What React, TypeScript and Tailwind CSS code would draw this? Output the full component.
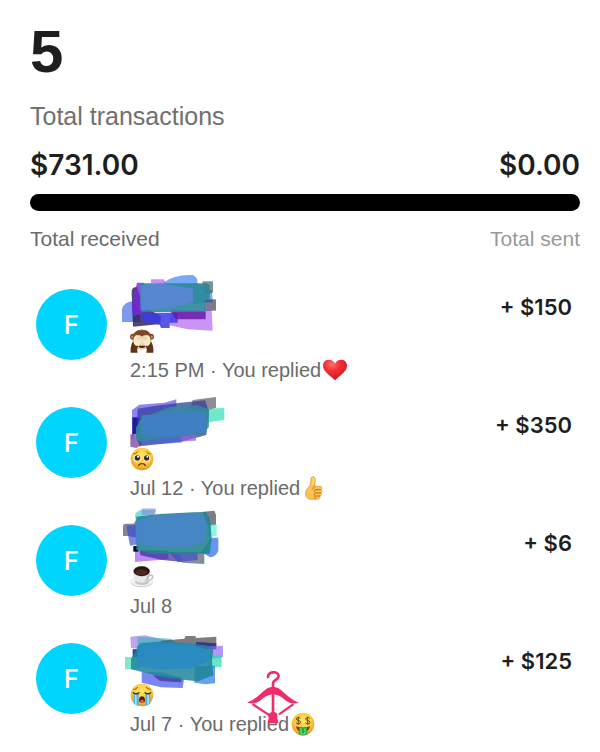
import React from "react";

type Transaction = {
  id: number;
  scribble: React.ReactNode;
  note: React.ReactNode;
  meta: string;
  reaction?: React.ReactNode;
  amount: string;
};

function FaceBase({ id }: { id: string }) {
  return (
    <>
      <defs>
        <radialGradient id={id} cx="50%" cy="35%" r="65%">
          <stop offset="0" stopColor="#ffe566" />
          <stop offset="0.6" stopColor="#fbc93d" />
          <stop offset="1" stopColor="#e8921f" />
        </radialGradient>
      </defs>
      <circle cx="36" cy="36" r="34" fill={`url(#${id})`} />
    </>
  );
}

function MonkeyEmoji() {
  return (
    <svg viewBox="0 0 72 72" className="w-6 h-6" role="img" aria-label="See no evil monkey">
      <circle cx="9" cy="23" r="9" fill="#8a4b2c" />
      <circle cx="63" cy="23" r="9" fill="#8a4b2c" />
      <circle cx="8" cy="24" r="4" fill="#e0a09a" />
      <circle cx="64" cy="24" r="4" fill="#e0a09a" />
      <path d="M36 2C19 2 8 12 8 27c0 20 12 34 28 34s28-14 28-34C64 12 53 2 36 2z" fill="#7b4a25" />
      <path d="M30 4l6-3 4 4z" fill="#b27a43" />
      <path d="M12 26c4-9 18-9 24-3 6-6 20-6 24 3l-3 25c-4 8-14 11-21 11s-17-3-21-11z" fill="#edd3a4" />
      <path d="M25 50h22c-2 9-20 9-22 0z" fill="#4b160d" />
      <path d="M2 71c-1-13 1-25 7-34l16 14c-4 7-4 12-2 20z" fill="#5e3319" />
      <path d="M70 71c1-13-1-25-7-34L47 51c4 7 4 12 2 20z" fill="#5e3319" />
      <path d="M11 42c-3-10 1-20 7-23 6-2 16 3 17 11 1 9-6 20-14 21-5 0-8-4-10-9z" fill="#f6e7c6" />
      <path d="M61 42c3-10-1-20-7-23-6-2-16 3-17 11-1 9 6 20 14 21 5 0 8-4 10-9z" fill="#f6e7c6" />
      <path d="M21 24l7 10M28 22l4 9M51 24l-7 10M44 22l-4 9" stroke="#d3b68a" strokeWidth="2" fill="none" />
    </svg>
  );
}

function PleadingEmoji() {
  return (
    <svg viewBox="0 0 72 72" className="w-6 h-6" role="img" aria-label="Pleading face">
      <FaceBase id="pleading" />
      <circle cx="21" cy="34" r="10" fill="#fff" />
      <circle cx="51" cy="34" r="10" fill="#fff" />
      <circle cx="22" cy="33" r="8" fill="#3b2a20" />
      <circle cx="50" cy="33" r="8" fill="#3b2a20" />
      <circle cx="24" cy="29" r="3" fill="#fff" />
      <circle cx="52" cy="29" r="3" fill="#fff" />
      <path d="M11 21c5 0 9-3 12-7M61 21c-5 0-9-3-12-7" stroke="#8a5a10" strokeWidth="3" fill="none" strokeLinecap="round" />
      <path d="M26 55c4-7 16-7 20 0" stroke="#5c2c0c" strokeWidth="4" fill="none" strokeLinecap="round" />
    </svg>
  );
}

function CoffeeEmoji() {
  return (
    <svg viewBox="0 0 72 72" className="w-6 h-6" role="img" aria-label="Hot beverage">
      <ellipse cx="35" cy="51" rx="34" ry="16" fill="#d3d3d1" />
      <ellipse cx="35" cy="49" rx="33" ry="14" fill="#f3f3f1" />
      <ellipse cx="36" cy="51" rx="21" ry="9" fill="#c5c5c3" />
      <path d="M59 31c12-3 14 11-5 16" stroke="#c4c4c2" strokeWidth="5" fill="none" />
      <path d="M9 20c0 18 8 33 26 33s26-15 26-33z" fill="#e8e8e6" />
      <path d="M44 50c10-4 16-15 17-29l-9 12z" fill="#bdbdbb" />
      <ellipse cx="35" cy="19" rx="27" ry="17" fill="#dddddb" />
      <ellipse cx="35" cy="19" rx="24" ry="15" fill="#2c1610" />
      <ellipse cx="34" cy="22" rx="18" ry="9" fill="#4b281b" />
    </svg>
  );
}

function CryingEmoji() {
  return (
    <svg viewBox="0 0 72 72" className="w-6 h-6" role="img" aria-label="Loudly crying face">
      <FaceBase id="crying" />
      <path d="M11 31h15v36c-7 1-12-1-15-6zM46 31h15v30c-3 5-8 7-15 6z" fill="#4eb2e5" />
      <path d="M15 33h5v32h-5zM52 33h5v32h-5z" fill="#a5e3f7" />
      <path d="M10 29c5 4 12 4 17 0M45 29c5 4 12 4 17 0" stroke="#4a2a10" strokeWidth="4" fill="none" strokeLinecap="round" />
      <path d="M11 19c5 0 9-2 12-6M61 19c-5 0-9-2-12-6" stroke="#8a5a10" strokeWidth="3" fill="none" strokeLinecap="round" />
      <path d="M27 53c0-10 4-13 9-13s9 3 9 13c0 7-18 7-18 0z" fill="#5b1b11" />
      <path d="M30 54c2-5 10-5 12 0-1 4-11 4-12 0z" fill="#ef5a4c" />
    </svg>
  );
}

function HeartEmoji() {
  return (
    <svg viewBox="0 0 72 72" className="w-6 h-6" role="img" aria-label="Red heart">
      <defs>
        <radialGradient id="heart" cx="38%" cy="22%" r="75%">
          <stop offset="0" stopColor="#ff7470" />
          <stop offset="0.4" stopColor="#f2333a" />
          <stop offset="1" stopColor="#cf1722" />
        </radialGradient>
      </defs>
      <path d="M36 67C26 55 0 42 0 23 0 2 29 0 36 17 43 0 72 2 72 23c0 19-26 32-36 44z" fill="url(#heart)" />
    </svg>
  );
}

function ThumbEmoji() {
  return (
    <svg viewBox="0 0 72 72" className="w-6 h-6" role="img" aria-label="Thumbs up">
      <path
        d="M29 3c5-3 11 1 11 8l-2 20h15c7 0 8 8 4 10 4 3 3 8 0 10 2 3 1 8-3 9 1 5-2 10-8 10H28C16 70 10 62 11 50c0-11 9-13 13-22 4-8 1-20 5-25z"
        fill="#fbc252"
        stroke="#dc8c28"
        strokeWidth="2"
      />
      <path d="M38 31c-4 2-6 5-5 9M57 41H41c-5 0-5 6-1 8M57 51H40c-4 1-4 7 0 8M54 60H40c-3 2-2 6 1 8" stroke="#bd6d1c" strokeWidth="3" fill="none" />
      <path d="M30 8c3-2 5 0 5 4l-2 14" stroke="#ffe08a" strokeWidth="4" fill="none" />
    </svg>
  );
}

function MoneyEmoji() {
  return (
    <svg viewBox="0 0 72 72" className="w-6 h-6" role="img" aria-label="Money mouth face">
      <FaceBase id="money" />
      <path d="M28 19c-3-4-12-3-12 2 0 6 13 3 13 10 0 6-11 6-14 1M22 14v24M56 19c-3-4-12-3-12 2 0 6 13 3 13 10 0 6-11 6-14 1M50 14v24" stroke="#6d4a12" strokeWidth="3" fill="none" />
      <path d="M15 43c12 5 30 5 42 0-3 13-11 18-21 18s-18-5-21-18z" fill="#69391a" />
      <path d="M24 46c8 2 16 2 24 0l1 21c-7 5-19 5-26 0z" fill="#27ad43" />
      <path d="M28 49c5 1 11 1 16 0v16c-4 3-12 3-16 0z" fill="#67dc70" />
      <path d="M40 53c-4-3-9-1-7 2 2 2 7 1 7 4s-6 3-8 1M36 50v15" stroke="#12772b" strokeWidth="2" fill="none" />
    </svg>
  );
}

function HangerLogo() {
  return (
    <svg viewBox="0 0 156 160" className="w-[52px] h-[53px]" fill="none" role="img" aria-label="Hanger">
      <path d="M63 18C61 2 92-2 95 14c2 13-17 11-17 24v14" stroke="#f02d6b" strokeWidth="8" strokeLinecap="round" />
      <path d="M0 95c22-6 40-28 58-41 12-8 28-8 40 0 18 13 36 35 58 41-14 6-29 2-41-7-10-9-22-17-37-17s-27 8-37 17c-12 9-27 13-41 7z" fill="#f02d6b" />
      <path d="M78 68v66" stroke="#f02d6b" strokeWidth="8" />
      <path d="M16 100l52 34M140 100l-44 31" stroke="#f02d6b" strokeWidth="7" />
      <path d="M66 128l8-4h10l7 5v14l3 14-8 1H70l-9-1 4-14-2-12z" fill="#f02d6b" />
    </svg>
  );
}

function ScribbleOne() {
  return (
    <svg viewBox="0 -3 390 192" className="-ml-[19px] w-[130px] h-16 shrink-0 overflow-visible" aria-hidden="true">
      <path d="M180 130l122 2 3 62-75-4-55-12z" fill="#b266f5" opacity="0.7" />
      <path d="M33 128q8-20 30-22l22 30 4 32H33z" fill="#4a6de8" opacity="0.7" />
      <path d="M62 78q0-15 16-15l20 60 52 27-2 24-82 8z" fill="#231a55" opacity="0.8" />
      <path d="M78 50h20l4 92-34 8-6-30z" fill="#7a26dd" opacity="0.8" />
      <path d="M90 140h110v30h-24v16h-26l-4-10-50-8z" fill="#3c3ae8" opacity="0.85" />
      <path d="M156 50q36-26 88-23 16 3 16 26l42 20 4 34-60 8z" fill="#4b8cf0" opacity="0.75" />
      <path d="M180 136h104v24h-90z" fill="#6a1aa8" opacity="0.85" />
      <path d="M274 46h32v34l-24 4z" fill="#3c5958" opacity="0.65" />
      <path d="M280 100h35v34h-35z" fill="#38344f" opacity="0.65" />
      <path d="M88 52h196l12 4v44l-14 6v28l-90 4H94l-6-14z" fill="#2b879c" opacity="0.9" />
      <path d="M89 58l60-6 97 16v40l-60 14-97 12z" fill="#5a86d6" opacity="0.9" />
      <path d="M120 40h38l6 12h-44z" fill="#9b4df0" opacity="0.6" />
    </svg>
  );
}

function ScribbleTwo() {
  return (
    <svg viewBox="0 -21 390 192" className="-ml-[19px] w-[130px] h-16 shrink-0 overflow-visible" aria-hidden="true">
      <path d="M63 60l22-16 75-6 36-10v24l-110 40-23 60z" fill="#6a5bef" opacity="0.75" />
      <path d="M245 30l70-9v32l-32 10-45-4z" fill="#5f5965" opacity="0.7" />
      <path d="M280 56l60-2v36l-30 4-27 6z" fill="#22dcb0" opacity="0.65" />
      <path d="M64 82h21v50h-21z" fill="#14108c" opacity="0.9" />
      <path d="M58 133h36l-2 32-16 9-18-4z" fill="#75439c" opacity="0.75" />
      <path d="M80 56q60-10 114-16l88-9 12 34-8 70-75 20-125 14-10-28z" fill="#33409e" opacity="0.75" />
      <path d="M205 120l50-4v36l-50 3z" fill="#9a5ee0" opacity="0.7" />
      <path d="M92 134l120-5v29l-120 6z" fill="#3d59e4" opacity="0.5" />
      <path d="M75 112l18-28 80-32 85-6 36 12v52l-16 22-54 6-110 12-25 6-14-10z" fill="#2f8d9c" opacity="0.8" />
      <path d="M92 76l52-4 20-8h60q34-4 58 8 8 30-5 50l-62 14-70 6-53-10z" fill="#417fc4" />
    </svg>
  );
}

function ScribbleThree() {
  return (
    <svg viewBox="0 -9 390 192" className="-ml-[19px] w-[130px] h-16 shrink-0 overflow-visible" aria-hidden="true">
      <path d="M36 65q0-6 8-6h24l10-14 30 55-50-1v-3H36z" fill="#51506a" opacity="0.7" />
      <path d="M72 34q5-14 20-17h43l-10 20-50 20z" fill="#34d9cf" opacity="0.7" />
      <path d="M92 13h42v20H92z" fill="#8d72d8" opacity="0.5" />
      <path d="M276 23l34-3 5 12v30l-25 5z" fill="#4c4556" opacity="0.7" />
      <path d="M290 62l27-2v36l-27 4z" fill="#32ecc5" opacity="0.55" />
      <path d="M298 101h24v40q-8 17-24 19l-28-15z" fill="#2867ef" opacity="0.7" />
      <path d="M72 138h100v28l-100 8z" fill="#a266ef" opacity="0.75" />
      <path d="M85 140l80 2 47 6 2 26-60-6-65-14z" fill="#3b2a98" opacity="0.7" />
      <path d="M213 145h67v35l-67-4z" fill="#62647d" opacity="0.75" />
      <path d="M175 145l85-2v25l-60 6z" fill="#324bc9" opacity="0.6" />
      <path d="M67 126h15v17H67z" fill="#070d26" />
      <path d="M46 65l34-3 20 55-43 8z" fill="#324bd6" opacity="0.65" />
      <path d="M76 38l70-8 100-5 40-1 12 25 4 58-6 42H120l-44-12z" fill="#23858f" opacity="0.9" />
      <path d="M74 50q80-26 200-20l14 30-6 50-50 20-80 0-78-10z" fill="#4985c9" opacity="0.9" />
    </svg>
  );
}

function ScribbleFour() {
  return (
    <svg viewBox="0 -27 390 192" className="-ml-[19px] w-[130px] h-16 shrink-0 overflow-visible" aria-hidden="true">
      <path d="M58 26l44-4 70 16-20 30-92-8z" fill="#9a80ea" opacity="0.7" />
      <path d="M80 26l100 6 20 20-120 4z" fill="#2fb3b8" opacity="0.6" />
      <path d="M65 64l35-2v25H65z" fill="#0d1b9b" opacity="0.85" />
      <path d="M42 87h45v36l-45 1z" fill="#28d8ae" opacity="0.6" />
      <path d="M150 38l70-6 4-8h30v6l62-4v28l-165 3z" fill="#44454e" opacity="0.7" />
      <path d="M255 42l61 4v18h-61z" fill="#22208a" opacity="0.75" />
      <path d="M296 55l40-2v34l-40 7z" fill="#8055ed" opacity="0.6" />
      <path d="M290 84l42-2v34l-42 4z" fill="#28dcb4" opacity="0.7" />
      <path d="M250 115l62-2v53l-29 3-33-5z" fill="#367fea" opacity="0.75" />
      <path d="M92 132l65 2 62 20-4 26-65-2-58-14z" fill="#4254ea" opacity="0.7" />
      <path d="M125 142l85 5 2 16-65-4z" fill="#30208c" opacity="0.6" />
      <path d="M60 92l27-46 70-6 128 12 22 12-4 36 4 42-47 18-92-10-108-26z" fill="#1f8598" opacity="0.85" />
      <path d="M78 54l65-12 90 6 62 18 4 32-60 24-98 2-61-8z" fill="#288bc3" opacity="0.9" />
    </svg>
  );
}

const transactions: Transaction[] = [
  {
    id: 1,
    scribble: <ScribbleOne />,
    note: <MonkeyEmoji />,
    meta: "2:15 PM · You replied",
    reaction: <HeartEmoji />,
    amount: "+ $150",
  },
  {
    id: 2,
    scribble: <ScribbleTwo />,
    note: <PleadingEmoji />,
    meta: "Jul 12 · You replied",
    reaction: <ThumbEmoji />,
    amount: "+ $350",
  },
  {
    id: 3,
    scribble: <ScribbleThree />,
    note: <CoffeeEmoji />,
    meta: "Jul 8",
    amount: "+ $6",
  },
  {
    id: 4,
    scribble: <ScribbleFour />,
    note: <CryingEmoji />,
    meta: "Jul 7 · You replied",
    reaction: <MoneyEmoji />,
    amount: "+ $125",
  },
];

function TransactionRow({ transaction }: { transaction: Transaction }) {
  return (
    <li className="flex items-start pl-1.5 pr-2">
      <div className="mt-6 w-[71px] h-[71px] shrink-0 rounded-full bg-[#00d5ff] flex items-center justify-center">
        <span className="text-white text-[26px] font-medium font-['Inter',sans-serif]">F</span>
      </div>
      <div className="ml-[23px] flex flex-col">
        {transaction.scribble}
        {transaction.note}
        <div className="mt-1 h-[26px] flex items-center gap-0.5 text-[#6b6b6b] text-xl">
          <span>{transaction.meta}</span>
          {transaction.reaction}
        </div>
      </div>
      <span className="ml-auto mt-[26px] text-[22px] leading-8 font-semibold font-['Inter',sans-serif]">
        {transaction.amount}
      </span>
    </li>
  );
}

function App() {
  return (
    <main className="relative bg-white text-[#1e1e1e] pl-[30px] pr-5 pt-5 pb-3 font-['Liberation_Sans',sans-serif]">
      <h1 className="text-[60px] leading-[64px] font-bold">5</h1>
      <p className="mt-4 text-[25px] leading-8 text-[#707070]">Total transactions</p>
      <div className="mt-[15px] flex justify-between text-[28px] leading-9 font-semibold font-['Inter',sans-serif]">
        <span>$731.00</span>
        <span>$0.00</span>
      </div>
      <div className="mt-[11px] h-[17px] rounded-full bg-black" />
      <div className="mt-3.5 flex justify-between text-[21px] leading-7">
        <span className="text-[#6b6b6b]">Total received</span>
        <span className="text-[#999999]">Total sent</span>
      </div>
      <ul className="mt-3">
        {transactions.map((transaction) => (
          <TransactionRow key={transaction.id} transaction={transaction} />
        ))}
      </ul>
      <div className="absolute left-[247px] top-[671px]">
        <HangerLogo />
      </div>
    </main>
  );
}

export default App;
